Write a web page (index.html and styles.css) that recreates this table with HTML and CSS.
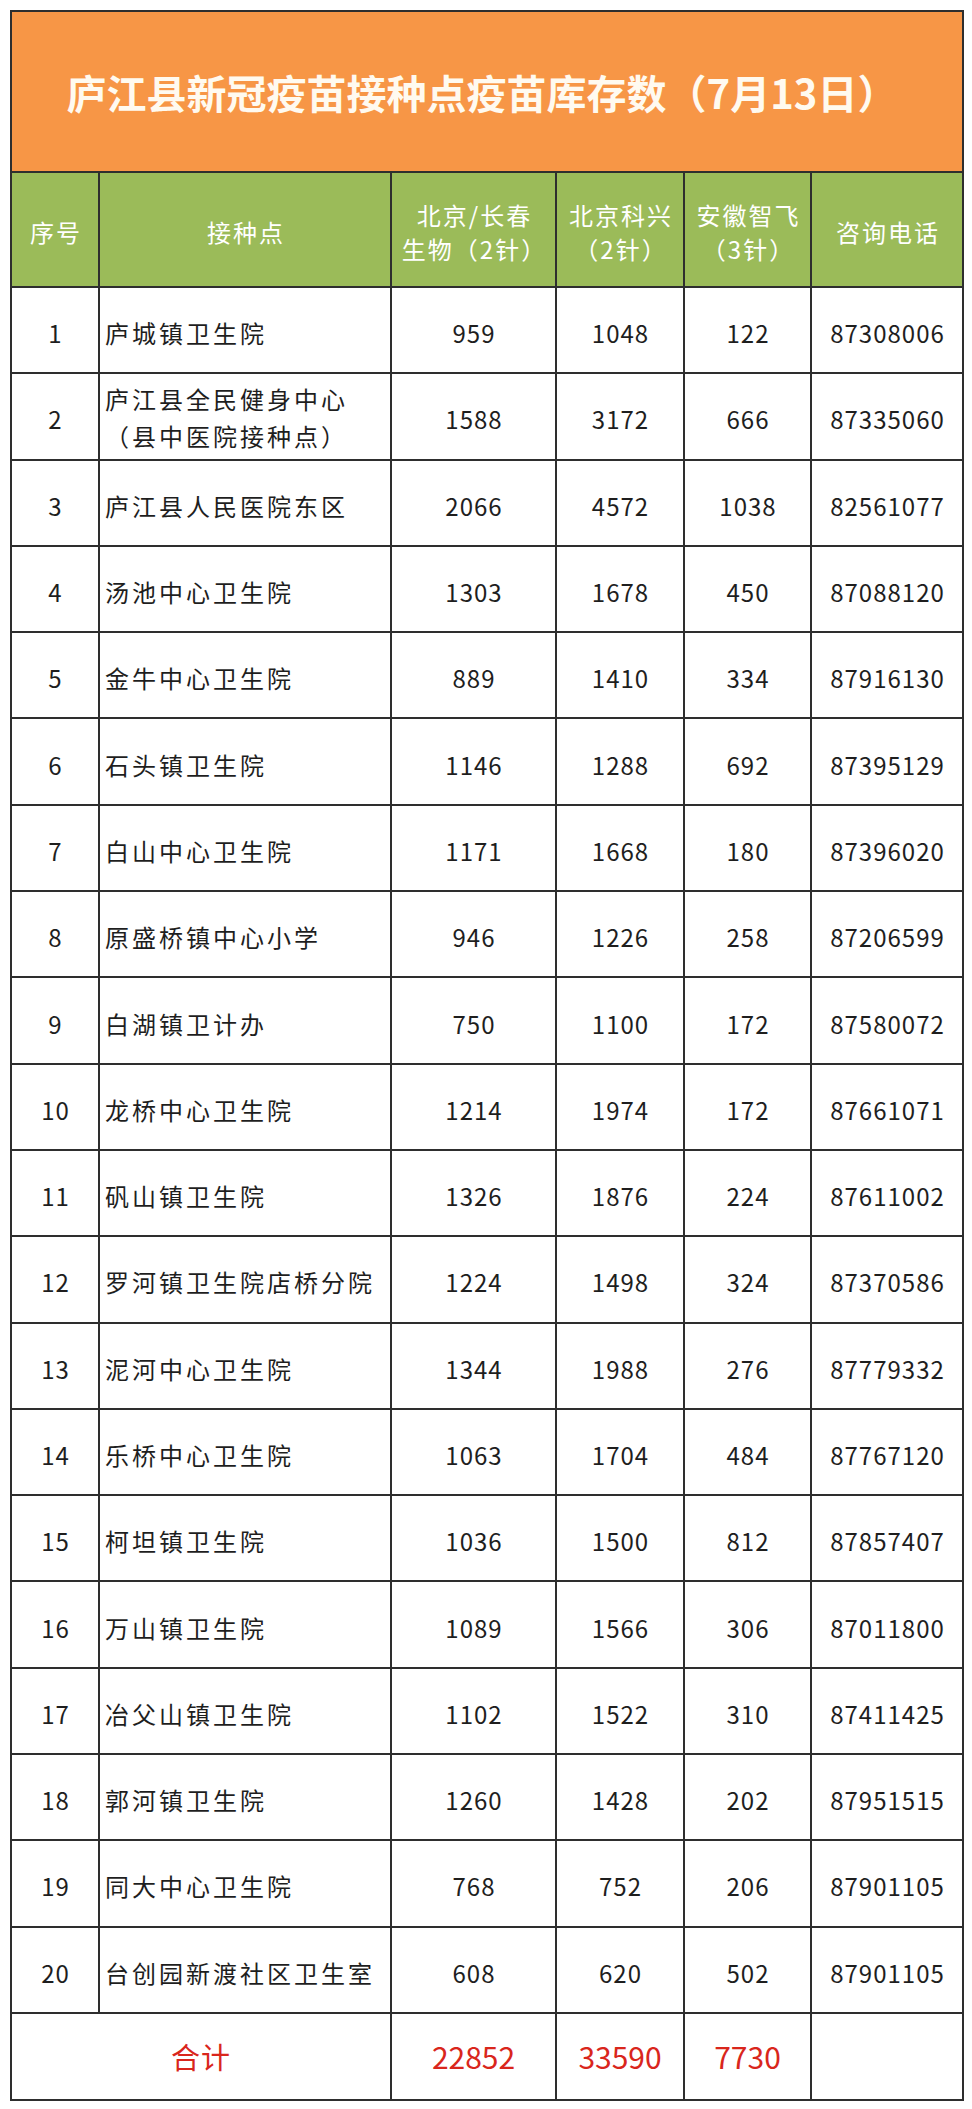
FILE: index.html
```html
<!DOCTYPE html>
<html lang="zh-CN">
<head>
<meta charset="utf-8">
<title>庐江县新冠疫苗接种点疫苗库存数</title>
<link rel="stylesheet" href="styles.css">
</head>
<body>
<div class="page">
<table class="stock">
  <colgroup>
    <col class="c-no"><col class="c-name"><col class="c-a"><col class="c-b"><col class="c-c"><col class="c-tel">
  </colgroup>
  <thead>
    <tr class="title-row"><th colspan="6" class="title">庐江县新冠疫苗接种点疫苗库存数（7月13日）</th></tr>
    <tr class="head-row">
      <th>序号</th>
      <th>接种点</th>
      <th>北京/长春<br>生物（2针）</th>
      <th>北京科兴<br>（2针）</th>
      <th>安徽智飞<br>（3针）</th>
      <th>咨询电话</th>
    </tr>
  </thead>
  <tbody>
    <tr><td class="num">1</td><td class="name">庐城镇卫生院</td><td class="num">959</td><td class="num">1048</td><td class="num">122</td><td class="num">87308006</td></tr>
    <tr><td class="num">2</td><td class="name two">庐江县全民健身中心<br>（县中医院接种点）</td><td class="num">1588</td><td class="num">3172</td><td class="num">666</td><td class="num">87335060</td></tr>
    <tr><td class="num">3</td><td class="name">庐江县人民医院东区</td><td class="num">2066</td><td class="num">4572</td><td class="num">1038</td><td class="num">82561077</td></tr>
    <tr><td class="num">4</td><td class="name">汤池中心卫生院</td><td class="num">1303</td><td class="num">1678</td><td class="num">450</td><td class="num">87088120</td></tr>
    <tr><td class="num">5</td><td class="name">金牛中心卫生院</td><td class="num">889</td><td class="num">1410</td><td class="num">334</td><td class="num">87916130</td></tr>
    <tr><td class="num">6</td><td class="name">石头镇卫生院</td><td class="num">1146</td><td class="num">1288</td><td class="num">692</td><td class="num">87395129</td></tr>
    <tr><td class="num">7</td><td class="name">白山中心卫生院</td><td class="num">1171</td><td class="num">1668</td><td class="num">180</td><td class="num">87396020</td></tr>
    <tr><td class="num">8</td><td class="name">原盛桥镇中心小学</td><td class="num">946</td><td class="num">1226</td><td class="num">258</td><td class="num">87206599</td></tr>
    <tr><td class="num">9</td><td class="name">白湖镇卫计办</td><td class="num">750</td><td class="num">1100</td><td class="num">172</td><td class="num">87580072</td></tr>
    <tr><td class="num">10</td><td class="name">龙桥中心卫生院</td><td class="num">1214</td><td class="num">1974</td><td class="num">172</td><td class="num">87661071</td></tr>
    <tr><td class="num">11</td><td class="name">矾山镇卫生院</td><td class="num">1326</td><td class="num">1876</td><td class="num">224</td><td class="num">87611002</td></tr>
    <tr><td class="num">12</td><td class="name">罗河镇卫生院店桥分院</td><td class="num">1224</td><td class="num">1498</td><td class="num">324</td><td class="num">87370586</td></tr>
    <tr><td class="num">13</td><td class="name">泥河中心卫生院</td><td class="num">1344</td><td class="num">1988</td><td class="num">276</td><td class="num">87779332</td></tr>
    <tr><td class="num">14</td><td class="name">乐桥中心卫生院</td><td class="num">1063</td><td class="num">1704</td><td class="num">484</td><td class="num">87767120</td></tr>
    <tr><td class="num">15</td><td class="name">柯坦镇卫生院</td><td class="num">1036</td><td class="num">1500</td><td class="num">812</td><td class="num">87857407</td></tr>
    <tr><td class="num">16</td><td class="name">万山镇卫生院</td><td class="num">1089</td><td class="num">1566</td><td class="num">306</td><td class="num">87011800</td></tr>
    <tr><td class="num">17</td><td class="name">冶父山镇卫生院</td><td class="num">1102</td><td class="num">1522</td><td class="num">310</td><td class="num">87411425</td></tr>
    <tr><td class="num">18</td><td class="name">郭河镇卫生院</td><td class="num">1260</td><td class="num">1428</td><td class="num">202</td><td class="num">87951515</td></tr>
    <tr><td class="num">19</td><td class="name">同大中心卫生院</td><td class="num">768</td><td class="num">752</td><td class="num">206</td><td class="num">87901105</td></tr>
    <tr class="last"><td class="num">20</td><td class="name">台创园新渡社区卫生室</td><td class="num">608</td><td class="num">620</td><td class="num">502</td><td class="num">87901105</td></tr>
  </tbody>
  <tfoot>
    <tr class="total-row">
      <td colspan="2" class="total-label">合计</td>
      <td class="total-num">22852</td>
      <td class="total-num">33590</td>
      <td class="total-num">7730</td>
      <td></td>
    </tr>
  </tfoot>
</table>
</div>
</body>
</html>
```
FILE: styles.css
```css
html, body {
  margin: 0;
  padding: 0;
  background: #ffffff;
}

.page {
  padding: 10px 0 0 10px;
}

.stock {
  border-collapse: collapse;
  table-layout: fixed;
  width: 952px;
  font-family: "Noto Sans CJK SC", "Noto Sans", sans-serif;
  color: #1e1e1e;
}

.c-no { width: 88px; }
.c-name { width: 292px; }
.c-a { width: 165px; }
.c-b { width: 128px; }
.c-c { width: 127px; }
.c-tel { width: 152px; }

.stock th,
.stock td {
  border: 2px solid #2e2e2e;
  padding: 0;
  vertical-align: middle;
}

.title-row {
  height: 161px;
}

.title-row .title {
  background: #f79646;
  color: #fffaf0;
  font-size: 40px;
  font-weight: 700;
  text-align: center;
  letter-spacing: 0;
  padding-right: 10px;
}

.head-row {
  height: 115px;
}

.head-row th {
  background: #9bbb59;
  color: #ffffff;
  font-size: 24px;
  font-weight: 400;
  line-height: 34px;
  letter-spacing: 2px;
  text-align: center;
  padding-left: 2px;
  padding-top: 4px;
}

.stock tbody tr {
  height: 86.3px;
}

.stock tbody td {
  font-size: 24px;
  line-height: 30px;
  padding-top: 6px;
}

.stock td.num {
  text-align: center;
  letter-spacing: 1px;
  padding-left: 1px;
}

.stock td.name {
  text-align: left;
  padding-left: 5px;
  letter-spacing: 3px;
}

.stock td.name.two {
  line-height: 37px;
  padding-top: 2px;
}

.total-row {
  height: 87px;
}

.total-row td {
  color: #d9261c;
  text-align: center;
}

.total-label {
  font-size: 29px;
  letter-spacing: 1px;
  padding-top: 2px;
}

.total-num {
  font-size: 30px;
  padding-top: 4px;
}
```
